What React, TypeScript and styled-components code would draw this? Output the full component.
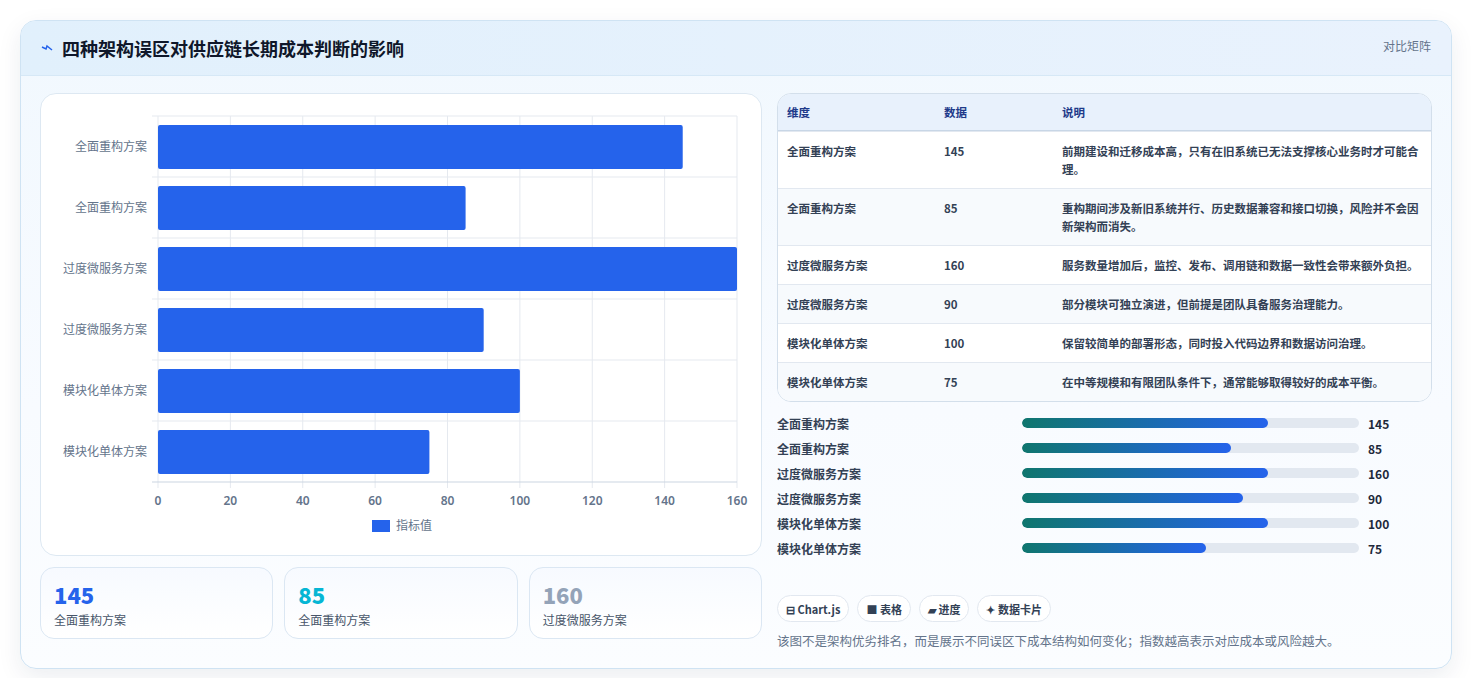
import React from 'react'
import styled, { createGlobalStyle } from 'styled-components'

const GlobalStyle = createGlobalStyle`
  body {
    margin: 0;
    background: #ffffff;
    font-family: 'Noto Sans CJK SC', 'Noto Sans', sans-serif;
    color: #1e293b;
  }
`

const rows = [
  { name: '全面重构方案', value: 145, note: '前期建设和迁移成本高，只有在旧系统已无法支撑核心业务时才可能合理。', fill: 73 },
  { name: '全面重构方案', value: 85, note: '重构期间涉及新旧系统并行、历史数据兼容和接口切换，风险并不会因新架构而消失。', fill: 62 },
  { name: '过度微服务方案', value: 160, note: '服务数量增加后，监控、发布、调用链和数据一致性会带来额外负担。', fill: 73 },
  { name: '过度微服务方案', value: 90, note: '部分模块可独立演进，但前提是团队具备服务治理能力。', fill: 65.6 },
  { name: '模块化单体方案', value: 100, note: '保留较简单的部署形态，同时投入代码边界和数据访问治理。', fill: 73 },
  { name: '模块化单体方案', value: 75, note: '在中等规模和有限团队条件下，通常能够取得较好的成本平衡。', fill: 54.6 },
]

const Page = styled.div`
  padding: 20px 20px 20px 20px;
`

const Card = styled.div`
  width: 1430px;
  border: 1px solid #cfe3f3;
  border-radius: 16px;
  background: linear-gradient(180deg, #f1f8fe 0%, #f8fbff 60%, #fbfdff 100%);
  box-shadow: 0 8px 24px rgba(15, 40, 80, 0.08);
  overflow: hidden;
`

const Header = styled.div`
  height: 54px;
  display: flex;
  align-items: center;
  justify-content: space-between;
  padding: 0 20px;
  background: linear-gradient(90deg, #e1f0fc, #e9f2fd);
  border-bottom: 1px solid #d6e8f6;
`

const Title = styled.h1`
  margin: 0;
  font-size: 18px;
  font-weight: 700;
  color: #0f172a;
  display: flex;
  align-items: center;
  gap: 9px;
`

const HeaderTag = styled.span`
  font-size: 12px;
  color: #64748b;
  align-self: flex-start;
  margin-top: 16px;
`

const Body = styled.div`
  display: grid;
  grid-template-columns: 722px 655px;
  gap: 15px;
  padding: 17px 19px 18px 19px;
`

const Column = styled.div`
  display: flex;
  flex-direction: column;
`

const ChartCard = styled.div`
  height: 461px;
  background: #ffffff;
  border: 1px solid #dde8f2;
  border-radius: 16px;
`

const Stats = styled.div`
  display: grid;
  grid-template-columns: repeat(3, 1fr);
  gap: 11px;
  margin-top: 11px;
`

const StatCard = styled.div`
  height: 72px;
  box-sizing: border-box;
  border: 1px solid #dbe7f3;
  border-radius: 14px;
  background: linear-gradient(180deg, #f7faff, #ffffff);
  padding: 13px 13px;
`

const StatValue = styled.div<{ $color: string }>`
  font-size: 22px;
  font-weight: 800;
  line-height: 26px;
  color: ${(p) => p.$color};
`

const StatLabel = styled.div`
  font-size: 12px;
  color: #475569;
  margin-top: 4px;
`

const Table = styled.div`
  border: 1px solid #d3dfeb;
  border-radius: 14px;
  overflow: hidden;
  background: #ffffff;
`

const Row = styled.div<{ $head?: boolean; $alt?: boolean }>`
  display: grid;
  grid-template-columns: 157px 118px 1fr;
  padding: ${(p) => (p.$head ? '9px 9px' : '10px 9px')};
  min-height: ${(p) => (p.$head ? '14px' : '14px')};
  font-size: 11.5px;
  line-height: 18px;
  font-weight: 600;
  color: ${(p) => (p.$head ? '#1e3a8a' : '#334155')};
  background: ${(p) => (p.$head ? '#e8f1fc' : p.$alt ? '#f7fafd' : '#ffffff')};
  border-top: ${(p) => (p.$head ? 'none' : '1px solid #e2e8f0')};
  ${(p) => p.$head && 'border-bottom: 1px solid #c8d6e6;'}
`

const Progress = styled.div`
  display: flex;
  flex-direction: column;
  gap: 7px;
  margin-top: 12px;
`

const PRow = styled.div`
  display: grid;
  grid-template-columns: 245px 337px 1fr;
  align-items: center;
  gap: 0;
  height: 18px;
  font-size: 12px;
  font-weight: 600;
  color: #334155;
`

const Track = styled.div`
  height: 10px;
  border-radius: 5px;
  background: #e2e8f0;
  overflow: hidden;
`

const Fill = styled.div`
  height: 100%;
  border-radius: 5px;
  background: linear-gradient(90deg, #0f766e, #2563eb);
`

const PValue = styled.span`
  padding-left: 9px;
  font-weight: 700;
  color: #1e293b;
`

const Tags = styled.div`
  display: flex;
  gap: 8px;
  margin-top: 38px;
`

const Tag = styled.span`
  height: 27px;
  box-sizing: border-box;
  padding: 0 8px;
  display: inline-flex;
  align-items: center;
  gap: 4px;
  border: 1px solid #e2e8f0;
  border-radius: 14px;
  background: #ffffff;
  font-size: 11px;
  font-weight: 600;
  color: #334155;
`

const Note = styled.p`
  margin: 9px 0 0;
  font-size: 12.5px;
  color: #64748b;
`

const Chart = () => {
  const x0 = 117
  const w = 579
  const top = 22
  const band = 61
  const labels = [0, 20, 40, 60, 80, 100, 120, 140, 160]
  return (
    <svg width="722" height="461" style={{ display: 'block' }}>
      {labels.map((l) => {
        const x = x0 + (l / 160) * w
        return (
          <g key={l}>
            <line x1={x} y1={top} x2={x} y2={top + band * 6 + 6} stroke="#e5e9ef" />
            <text x={x} y={411} fontSize="12" fontWeight="600" fill="#64748b" textAnchor="middle" fontFamily="Noto Sans, sans-serif">{l}</text>
          </g>
        )
      })}
      {rows.map((r, i) => (
        <g key={i}>
          <line x1={x0 - 6} y1={top + band * i} x2={x0 + w} y2={top + band * i} stroke="#e5e9ef" />
          <rect x={x0} y={top + band * i + 9} width={(r.value / 160) * w} height={44} rx="2" fill="#2563eb" />
          <text x={x0 - 11} y={top + band * i + 35} fontSize="12" fill="#64748b" textAnchor="end" fontFamily="Noto Sans CJK SC, sans-serif">{r.name}</text>
        </g>
      ))}
      <line x1={x0 - 6} y1={top + band * 6} x2={x0 + w} y2={top + band * 6} stroke="#cbd5e1" />
      <rect x="331" y="426" width="18" height="12" fill="#2563eb" />
      <text x="355" y="436" fontSize="12" fill="#64748b" fontFamily="Noto Sans CJK SC, sans-serif">指标值</text>
    </svg>
  )
}

export default function App() {
  return (
    <Page>
      <GlobalStyle />
      <Card>
        <Header>
          <Title>
            <svg width="12" height="10" viewBox="0 0 12 10">
              <path d="M1 4 L5 6 L6 3 L11 7" stroke="#2563eb" strokeWidth="1.5" fill="none" />
            </svg>
            四种架构误区对供应链长期成本判断的影响
          </Title>
          <HeaderTag>对比矩阵</HeaderTag>
        </Header>
        <Body>
          <Column>
            <ChartCard>
              <Chart />
            </ChartCard>
            <Stats>
              <StatCard>
                <StatValue $color="#2563eb">145</StatValue>
                <StatLabel>全面重构方案</StatLabel>
              </StatCard>
              <StatCard>
                <StatValue $color="#06b6d4">85</StatValue>
                <StatLabel>全面重构方案</StatLabel>
              </StatCard>
              <StatCard>
                <StatValue $color="#94a3b8">160</StatValue>
                <StatLabel>过度微服务方案</StatLabel>
              </StatCard>
            </Stats>
          </Column>
          <Column>
            <Table>
              <Row $head>
                <span>维度</span>
                <span>数据</span>
                <span>说明</span>
              </Row>
              {rows.map((r, i) => (
                <Row key={i} $alt={i % 2 === 1}>
                  <span>{r.name}</span>
                  <span>{r.value}</span>
                  <span>{r.note}</span>
                </Row>
              ))}
            </Table>
            <Progress>
              {rows.map((r, i) => (
                <PRow key={i}>
                  <span>{r.name}</span>
                  <Track>
                    <Fill style={{ width: `${r.fill}%` }} />
                  </Track>
                  <PValue>{r.value}</PValue>
                </PRow>
              ))}
            </Progress>
            <Tags>
              <Tag>⊟ Chart.js</Tag>
              <Tag>■ 表格</Tag>
              <Tag>▰ 进度</Tag>
              <Tag>✦ 数据卡片</Tag>
            </Tags>
            <Note>该图不是架构优劣排名，而是展示不同误区下成本结构如何变化；指数越高表示对应成本或风险越大。</Note>
          </Column>
        </Body>
      </Card>
    </Page>
  )
}
